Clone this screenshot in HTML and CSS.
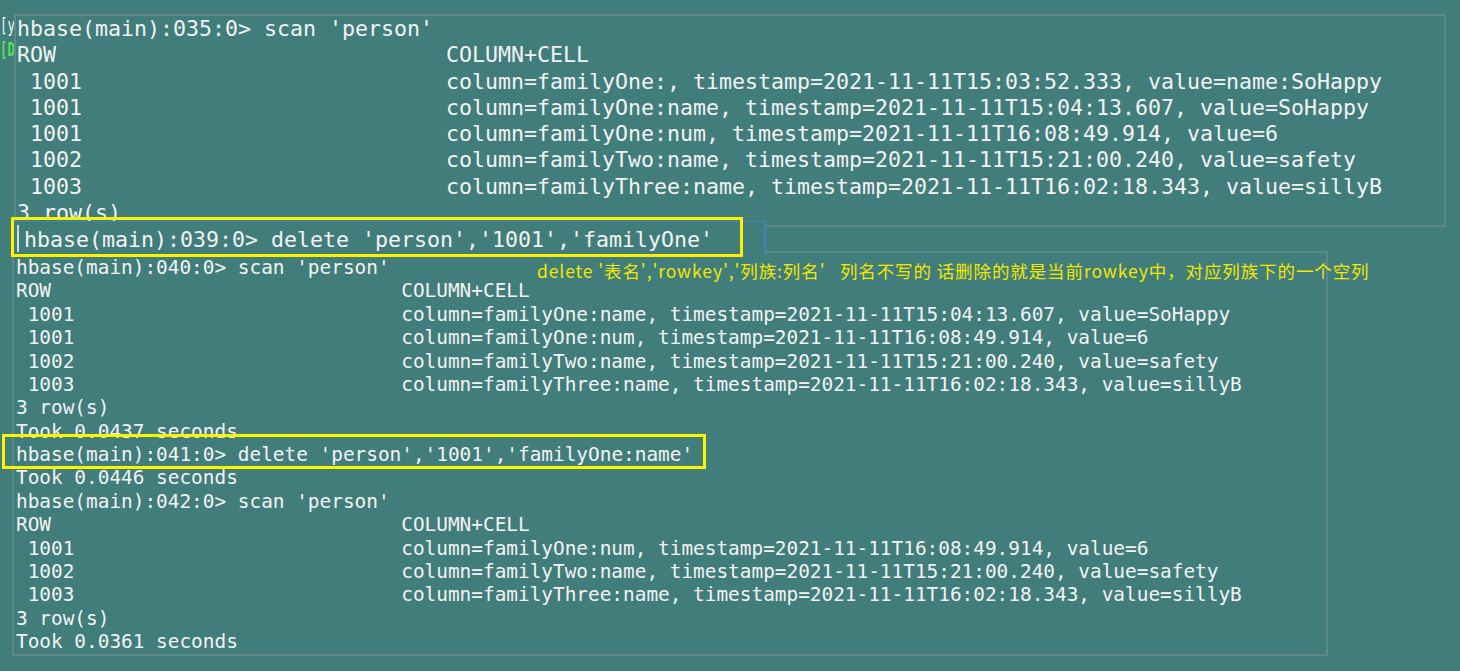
FILE: index.html
```html
<!DOCTYPE html>
<html lang="zh-CN">
<head>
<meta charset="utf-8">
<title>hbase delete</title>
<link rel="stylesheet" href="styles.css">
</head>
<body>
<div class="desk">
  <div class="under">
    <div class="under-line">[y</div>
    <div class="under-line green">[D</div>
  </div>

  <section class="shot shot-top">
    <div class="ln">hbase(main):035:0&gt; scan 'person'</div>
    <div class="ln row"><span class="key">ROW</span><span>COLUMN+CELL</span></div>
    <div class="ln row"><span class="key"> 1001</span><span>column=familyOne:, timestamp=2021-11-11T15:03:52.333, value=name:SoHappy</span></div>
    <div class="ln row"><span class="key"> 1001</span><span>column=familyOne:name, timestamp=2021-11-11T15:04:13.607, value=SoHappy</span></div>
    <div class="ln row"><span class="key"> 1001</span><span>column=familyOne:num, timestamp=2021-11-11T16:08:49.914, value=6</span></div>
    <div class="ln row"><span class="key"> 1002</span><span>column=familyTwo:name, timestamp=2021-11-11T15:21:00.240, value=safety</span></div>
    <div class="ln row"><span class="key"> 1003</span><span>column=familyThree:name, timestamp=2021-11-11T16:02:18.343, value=sillyB</span></div>
    <div class="ln">3 row(s)</div>
  </section>

  <section class="shot shot-bottom">
    <div class="ln">hbase(main):040:0&gt; scan 'person'</div>
    <div class="ln row"><span class="key">ROW</span><span>COLUMN+CELL</span></div>
    <div class="ln row"><span class="key"> 1001</span><span>column=familyOne:name, timestamp=2021-11-11T15:04:13.607, value=SoHappy</span></div>
    <div class="ln row"><span class="key"> 1001</span><span>column=familyOne:num, timestamp=2021-11-11T16:08:49.914, value=6</span></div>
    <div class="ln row"><span class="key"> 1002</span><span>column=familyTwo:name, timestamp=2021-11-11T15:21:00.240, value=safety</span></div>
    <div class="ln row"><span class="key"> 1003</span><span>column=familyThree:name, timestamp=2021-11-11T16:02:18.343, value=sillyB</span></div>
    <div class="ln">3 row(s)</div>
    <div class="ln">Took 0.0437 seconds</div>
    <div class="ln">hbase(main):041:0&gt; delete 'person','1001','familyOne:name'</div>
    <div class="ln">Took 0.0446 seconds</div>
    <div class="ln">hbase(main):042:0&gt; scan 'person'</div>
    <div class="ln row"><span class="key">ROW</span><span>COLUMN+CELL</span></div>
    <div class="ln row"><span class="key"> 1001</span><span>column=familyOne:num, timestamp=2021-11-11T16:08:49.914, value=6</span></div>
    <div class="ln row"><span class="key"> 1002</span><span>column=familyTwo:name, timestamp=2021-11-11T15:21:00.240, value=safety</span></div>
    <div class="ln row"><span class="key"> 1003</span><span>column=familyThree:name, timestamp=2021-11-11T16:02:18.343, value=sillyB</span></div>
    <div class="ln">3 row(s)</div>
    <div class="ln">Took 0.0361 seconds</div>
  </section>

  <div class="snip">
    <span class="caret"></span>
    <span class="snip-text">hbase(main):039:0&gt; delete 'person','1001','familyOne'</span>
  </div>
  <div class="frame frame-one"></div>
  <div class="frame frame-two"></div>

  <p class="note">delete '表名','rowkey','列族:列名'   列名不写的 话删除的就是当前rowkey中，对应列族下的一个空列</p>
</div>
</body>
</html>
```

FILE: styles.css
```css
html, body {
  margin: 0;
  padding: 0;
}
body {
  background: #417d7b;
  width: 1460px;
  height: 671px;
  overflow: hidden;
}
.desk {
  position: relative;
  width: 1460px;
  height: 671px;
  background: #417d7b;
  color: #f3f3f3;
  font-family: "DejaVu Sans Mono", "Liberation Mono", monospace;
}
.under {
  position: absolute;
  left: 0;
  top: 13px;
  font-size: 20px;
  line-height: 24px;
  transform: scaleX(0.62);
  transform-origin: left top;
}
.under-line {
  white-space: pre;
}
.under-line.green {
  color: #52e052;
  font-weight: bold;
}
.shot {
  position: absolute;
  box-sizing: border-box;
  background: #417d7b;
  border: 2px solid #5e8987;
  overflow: hidden;
}
.shot-top {
  left: 14px;
  top: 14px;
  width: 1432px;
  height: 213px;
  padding: 0 0 0 1px;
  font-size: 21.6px;
  line-height: 26.3px;
}
.shot-bottom {
  left: 12px;
  top: 251px;
  width: 1316px;
  height: 405px;
  padding: 3px 0 0 2px;
  font-size: 19.4px;
  line-height: 23.375px;
}
.ln {
  display: block;
  white-space: pre;
}
.row {
  display: flex;
}
.key {
  flex: 0 0 33ch;
}
.snip {
  position: absolute;
  left: 11px;
  top: 221px;
  width: 755px;
  height: 33px;
  box-sizing: border-box;
  background: #417d7b;
  border-top: 1px solid #3d87b8;
  border-right: 2px solid #3d87b8;
  display: flex;
  align-items: center;
  font-size: 21.6px;
  line-height: 26px;
}
.caret {
  display: block;
  width: 2px;
  height: 27px;
  margin: 0 5px 0 6px;
  background: #d8d8d8;
}
.snip-text {
  display: block;
  white-space: pre;
  padding-top: 3px;
}
.frame {
  position: absolute;
  box-sizing: border-box;
  border: 3px solid #fff200;
}
.frame-one {
  left: 11px;
  top: 217px;
  width: 732px;
  height: 40px;
}
.frame-two {
  left: 2px;
  top: 434px;
  width: 704px;
  height: 35px;
}
.note {
  position: absolute;
  left: 537px;
  top: 259px;
  margin: 0;
  font-family: "Noto Sans CJK SC", "Noto Sans", sans-serif;
  font-size: 17.5px;
  letter-spacing: 0.9px;
  line-height: 24px;
  color: #f2e800;
  white-space: pre;
}
```
